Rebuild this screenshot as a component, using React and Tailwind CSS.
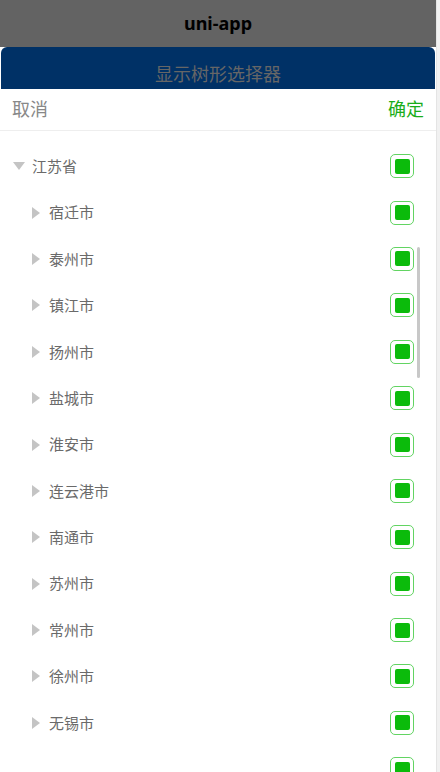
import React from 'react'

const cities = ['宿迁市', '泰州市', '镇江市', '扬州市', '盐城市', '淮安市', '连云港市', '南通市', '苏州市', '常州市', '徐州市', '无锡市']

function Check() {
  return (
    <div className="w-6 h-6 rounded-[5px] border border-[#62d462] flex items-center justify-center">
      <div className="w-[15px] h-[15px] rounded-[2px] bg-[#0bbb0b]" />
    </div>
  )
}

function Row({ label, level, open }) {
  return (
    <div className="h-[46.4px] shrink-0 flex items-center pr-[22px]">
      <div className={`flex items-center ${level === 0 ? 'pl-[13px]' : 'pl-[32px]'}`}>
        {open ? (
          <svg width="12" height="8" viewBox="0 0 12 8"><path d="M0 0 H12 L6 8 Z" fill="#c4c4c4" /></svg>
        ) : (
          <svg width="8" height="12" viewBox="0 0 8 12"><path d="M0 0 V12 L8 6 Z" fill="#c4c4c4" /></svg>
        )}
        <span className={`text-[15px] text-[#6a6a6a] ${level === 0 ? 'ml-[7px]' : 'ml-[9px]'}`}>{label}</span>
      </div>
      <div className="ml-auto">
        <Check />
      </div>
    </div>
  )
}

export default function App() {
  return (
    <div className="w-[440px] h-[772px] flex overflow-hidden" style={{ fontFamily: '"Noto Sans", "Noto Sans CJK SC", sans-serif' }}>
      <div className="w-[436px] flex flex-col bg-white">
        {/* nav under mask */}
        <div className="h-[47px] shrink-0 bg-[#636363] flex items-center justify-center">
          <span className="text-[18px] font-bold text-black">uni-app</span>
        </div>
        <div className="h-[42px] shrink-0 bg-[#003166] rounded-t-[6px] mx-[1px] flex items-start justify-center pt-[15px]">
          <span className="text-[18px] text-[#666] leading-[24px]">显示树形选择器</span>
        </div>

        {/* popup */}
        <div className="flex-1 min-h-0 flex flex-col bg-white overflow-hidden">
          <div className="h-[42px] shrink-0 flex items-center justify-between px-3 border-b border-[#eee]">
            <span className="text-[18px] text-[#888]">取消</span>
            <span className="text-[18px] text-[#1aad19]">确定</span>
          </div>
          <div className="relative flex-1 min-h-0 overflow-hidden flex flex-col pt-[12px]">
            <Row label="江苏省" level={0} open />
            {cities.map((c) => (
              <Row key={c} label={c} level={1} />
            ))}
            {/* next row, only its checkbox peeks in */}
            <div className="h-[46.4px] shrink-0 flex items-center pr-[22px]">
              <div className="ml-auto">
                <Check />
              </div>
            </div>
            <div className="absolute left-[417px] top-[116px] w-[3px] h-[131px] bg-[#c8c8c8] rounded-full" />
          </div>
        </div>
      </div>
      <div className="w-[4px] bg-[#f1f1f1] border-l border-[#e4e4e4]" />
    </div>
  )
}
